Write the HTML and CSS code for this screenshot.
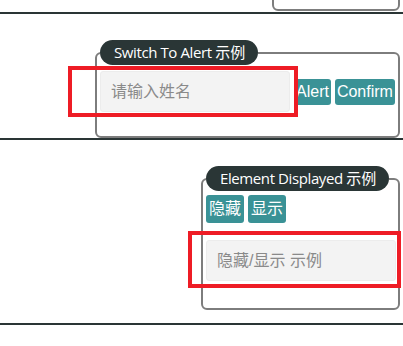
FILE: index.html
```html
<!DOCTYPE html>
<html lang="zh">
<head>
<meta charset="utf-8">
<link rel="stylesheet" href="styles.css">
</head>
<body>
<div class="section section-top">
  <div class="box box-top"></div>
</div>

<div class="section section-alert">
  <fieldset class="box box-alert">
    <legend class="pill">Switch To Alert <span class="cjk">示例</span></legend>
    <div class="row">
      <input class="field" type="text" placeholder="请输入姓名">
      <button class="btn">Alert</button>
      <button class="btn">Confirm</button>
    </div>
  </fieldset>
  <div class="highlight highlight-alert"></div>
</div>

<div class="section section-display">
  <fieldset class="box box-display">
    <legend class="pill">Element Displayed <span class="cjk">示例</span></legend>
    <div class="row">
      <button class="btn btn-cjk">隐藏</button>
      <button class="btn btn-cjk">显示</button>
    </div>
    <input class="field field-display" type="text" placeholder="隐藏/显示 示例">
  </fieldset>
  <div class="highlight highlight-display"></div>
</div>
</body>
</html>
```

FILE: styles.css
```css
html, body {
  margin: 0;
  padding: 0;
  background: #fff;
  overflow: hidden;
}
body {
  width: 403px;
  height: 346px;
  font-family: "Liberation Sans", "Noto Sans CJK SC", sans-serif;
}
.section {
  position: relative;
  display: flex;
  justify-content: flex-end;
  padding-right: 3px;
  border-bottom: 2px solid #2a3535;
}
.box {
  margin: 0;
  min-width: 0;
  border: 2px solid #7d7d7d;
  border-radius: 6px;
  background: #fff;
  box-sizing: border-box;
}
.box-top {
  width: 128px;
  height: 30px;
  margin-top: -19px;
  margin-bottom: 1px;
}
.section-alert {
  padding-top: 26px;
}
.box-alert {
  width: 305px;
  padding: 0 2px 24px 3px;
}
.section-display {
  padding-top: 26px;
  padding-bottom: 13px;
}
.box-display {
  width: 199px;
  padding: 0 2px 27px 3px;
}
.pill {
  height: 25px;
  line-height: 25px;
  padding: 0 13px 0 14px;
  border-radius: 13px;
  background: #2a3636;
  color: #fff;
  font-family: "Open Sans", "Noto Sans CJK SC", sans-serif;
  font-size: 15px;
  font-weight: 500;
  letter-spacing: -0.4px;
  box-sizing: border-box;
}
.cjk {
  font-weight: 400;
  letter-spacing: 0;
}
.row {
  display: flex;
  align-items: center;
  gap: 4px;
  margin-top: 4px;
}
.box-alert .row {
  margin-top: 6px;
}
.field {
  flex: none;
  width: 190px;
  height: 41px;
  box-sizing: border-box;
  margin: 0;
  padding: 0 10px;
  border: 1px solid #ececec;
  border-radius: 3px;
  background: #f3f3f3;
  font-family: "Liberation Sans", "Noto Sans CJK SC", sans-serif;
  font-size: 16px;
  color: #555;
}
.field::placeholder {
  color: #8a8a8a;
}
.field-display {
  display: block;
  margin-top: 17px;
}
.btn {
  flex: none;
  margin: 0;
  padding: 3px 2px;
  border: none;
  border-radius: 3px;
  background: #3a9296;
  color: #fff;
  font-family: "Liberation Sans", "Noto Sans CJK SC", sans-serif;
  font-size: 16px;
  line-height: 20px;
}
.btn-cjk {
  padding: 4px 3px;
}
.highlight {
  position: absolute;
  border: 4px solid #ee1c25;
  box-sizing: border-box;
}
.highlight-alert {
  left: 68px;
  top: 52px;
  width: 230px;
  height: 51px;
}
.highlight-display {
  left: 188px;
  top: 91px;
  width: 213px;
  height: 57px;
}
```
